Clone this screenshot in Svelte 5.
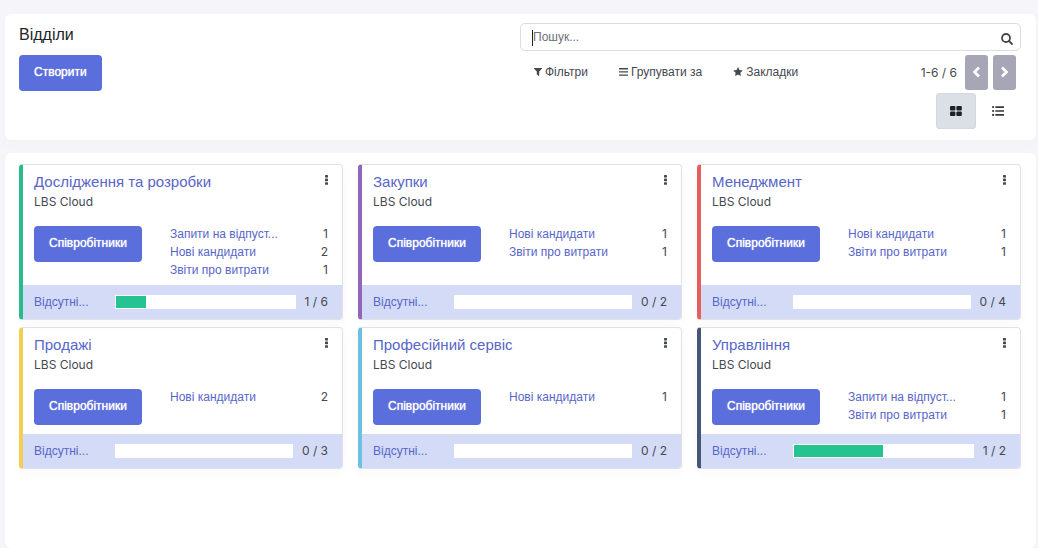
<script>
  const absent = 'Відсутні...';
  const leave = 'Запити на відпуст...';
  const candidates = 'Нові кандидати';
  const expenses = 'Звіти про витрати';

  const departments = [
    { name: 'Дослідження та розробки', color: '#2abb8c', rows: [[leave, 1], [candidates, 2], [expenses, 1]], away: 1, total: 6 },
    { name: 'Закупки', color: '#9365b8', rows: [[candidates, 1], [expenses, 1]], away: 0, total: 2 },
    { name: 'Менеджмент', color: '#e5605c', rows: [[candidates, 1], [expenses, 1]], away: 0, total: 4 },
    { name: 'Продажі', color: '#f2cf52', rows: [[candidates, 2]], away: 0, total: 3 },
    { name: 'Професійний сервіс', color: '#6cc1e0', rows: [[candidates, 1]], away: 0, total: 2 },
    { name: 'Управління', color: '#475577', rows: [[leave, 1], [expenses, 1]], away: 1, total: 2 }
  ];

  let query = $state('');
</script>

<header class="panel control">
  <div class="left">
    <h1>Відділи</h1>
    <button class="primary create">Створити</button>
  </div>
  <div class="right">
    <div class="search">
      <input type="text" aria-label="Пошук" placeholder="Пошук..." bind:value={query} />
      <span class="caret"></span>
      <button class="plain" aria-label="Пошук">
        <svg width="12" height="12" viewBox="0 0 12 12" fill="none" stroke="#444950" stroke-width="1.800"><circle cx="5" cy="5" r="4" /><path d="M8 8l3 3" stroke-linecap="round" /></svg>
      </button>
    </div>
    <div class="tools">
      <div class="filters">
        <button class="plain">
          <svg width="8" height="8" viewBox="0 0 8 8" fill="#444950"><path d="M.4 0h7.2c.4 0 .5.4.3.7L5.200 3.500V7.600c0 .4-.3.500-.6.300L3 6.600c-.2-.1-.2-.2-.2-.4V3.500L.1.700C-.1.400 0 0 .4 0z" /></svg>
          Фільтри
        </button>
        <button class="plain">
          <svg width="9" height="8" viewBox="0 0 9 8" fill="#444950"><path d="M0 0h9v1.400H0zM0 3.200h9v1.400H0zM0 6.400h9v1.400H0z" /></svg>
          Групувати за
        </button>
        <button class="plain">
          <svg width="10" height="9" viewBox="0 0 10 9" fill="#444950"><path d="M5 0l1.450 3 3.350.450-2.450 2.250.6 3.300L5 7.400 2.050 9l.6-3.300L.2 3.450 3.550 3z" /></svg>
          Закладки
        </button>
      </div>
      <div class="pager">
        <span>1-6 / 6</span>
        <button aria-label="Попередня"><svg width="9" height="12" viewBox="0 0 9 12" fill="none" stroke="#fff" stroke-width="2.600"><path d="M7 1.500L2.500 6 7 10.500" /></svg></button>
        <button aria-label="Наступна"><svg width="9" height="12" viewBox="0 0 9 12" fill="none" stroke="#fff" stroke-width="2.600"><path d="M2 1.500L6.500 6 2 10.500" /></svg></button>
      </div>
    </div>
    <div class="views">
      <button class="active" aria-label="Канбан">
        <svg width="12" height="10" viewBox="0 0 12 10" fill="#1d2127"><rect width="5.400" height="4.500" rx="1" /><rect x="6.400" width="5.400" height="4.500" rx="1" /><rect y="5.400" width="5.400" height="4.500" rx="1" /><rect x="6.400" y="5.400" width="5.400" height="4.500" rx="1" /></svg>
      </button>
      <button aria-label="Список">
        <svg width="12" height="10" viewBox="0 0 12 10" fill="#343a40"><circle cx="1.100" cy="1.100" r="1.100" /><circle cx="1.100" cy="5" r="1.100" /><circle cx="1.100" cy="8.900" r="1.100" /><path d="M3.300.3H12v1.600H3.300zM3.300 4.200H12v1.600H3.300zM3.300 8.100H12v1.600H3.300z" /></svg>
      </button>
    </div>
  </div>
</header>

<main class="panel board">
  {#each departments as d}
    <article style:border-left-color={d.color}>
      <div class="heading">
        <h2><a href="#department">{d.name}</a></h2>
        <button class="plain menu" aria-label="Меню">
          <svg width="3" height="10" viewBox="0 0 3 10" fill="#444950"><rect width="3" height="2.600" rx=".6" /><rect y="3.600" width="3" height="2.600" rx=".6" /><rect y="7.200" width="3" height="2.600" rx=".6" /></svg>
        </button>
      </div>
      <p>LBS Cloud</p>
      <div class="body">
        <div class="action"><button class="primary">Співробітники</button></div>
        <ul>
          {#each d.rows as [label, count]}
            <li><a href="#requests">{label}</a><span>{count}</span></li>
          {/each}
        </ul>
      </div>
      <footer>
        <a href="#absent">{absent}</a>
        <div class="bar"><div class="fill" style:width="{(d.away / d.total) * 100}%"></div></div>
        <span>{d.away} / {d.total}</span>
      </footer>
    </article>
  {/each}
</main>

<style>
  :global(body) {
    background: #f6f6fa;
    color: #444950;
    font: 12px/18px 'Liberation Sans', Arial, sans-serif;
  }
  :global(#app) {
    display: flex;
    flex-direction: column;
    gap: 13px;
    box-sizing: border-box;
    min-height: 100vh;
    padding: 14px 2px 0 5px;
  }
  * { box-sizing: border-box; }
  h1, h2, p, ul { margin: 0; padding: 0; font-weight: 400; }
  button { font: inherit; color: inherit; border: 0; padding: 0; cursor: pointer; }
  a { color: #5766c9; text-decoration: none; }
  svg { display: block; flex: none; }
  .panel { background: #fff; border-radius: 6px; box-shadow: 0 4px 12px rgba(60, 60, 120, 0.03); }
  .control {
    display: grid;
    grid-template-columns: 1fr 1fr;
    padding: 9px 15px 11px 14px;
  }
  h1 { font-size: 16px; line-height: 24px; color: #212529; }
  .primary {
    height: 36px;
    padding: 0 15px 2px;
    border-radius: 4px;
    background: #5a6fdc;
    color: #fff;
    text-shadow: 0 0 1px #fff;
  }
  .create { margin-top: 8px; }
  .plain { display: flex; align-items: center; gap: 3px; background: none; }
  .search {
    position: relative;
    display: flex;
    align-items: center;
    height: 28px;
    padding: 0 7px 0 12px;
    border: 1px solid #dcdde1;
    border-radius: 5px;
  }
  .search input {
    flex: 1;
    min-width: 0;
    padding: 0;
    border: 0;
    outline: 0;
    background: none;
    font: inherit;
    color: #444950;
  }
  .search input::placeholder { color: #6c7178; opacity: 1; }
  .search .plain { padding-top: 4px; }
  .caret { position: absolute; left: 11px; top: 6px; width: 1px; height: 16px; background: #222; }
  .tools { display: flex; justify-content: space-between; align-items: center; margin-top: 4px; padding-right: 5px; }
  .filters { display: flex; gap: 31px; padding: 0 0 2px 14px; }
  .pager { display: flex; align-items: center; gap: 5px; }
  .pager span { padding-right: 3px; font: 12px/18px Inter, sans-serif; }
  .pager button {
    display: grid;
    place-items: center;
    width: 23px;
    height: 35px;
    padding-bottom: 2px;
    border-radius: 3px;
    background: #a6a6b7;
  }
  .views { display: flex; justify-content: flex-end; gap: 2px; margin-top: 3px; padding-right: 3px; }
  .views button {
    display: grid;
    place-items: center;
    width: 40px;
    height: 36px;
    border: 1px solid transparent;
    border-radius: 3px;
    background: none;
  }
  .views .active { background: #dae0e5; border-color: #d3d9df; }
  .board {
    flex: 1;
    display: grid;
    grid-template-columns: repeat(3, 1fr);
    align-content: start;
    gap: 7px 15px;
    padding: 11px 15px 11px 14px;
  }
  article {
    display: flex;
    flex-direction: column;
    border: 1px solid #dee2e6;
    border-left: 4px solid;
    border-radius: 4px;
    box-shadow: 0 4px 12px rgba(60, 60, 120, 0.03);
    overflow: hidden;
  }
  .heading { display: flex; justify-content: space-between; padding: 7px 14px 1px 11px; }
  h2 { font-size: 15px; line-height: 20px; }
  .menu { height: 16px; }
  p { padding: 0 11px; font: 12px/18px Inter, sans-serif; }
  .body { flex: 1; display: grid; grid-template-columns: 136px 1fr; padding: 14px 14px 0 11px; }
  .action { padding: 1px 0 9px; }
  ul { list-style: none; padding-bottom: 6px; }
  li { display: flex; justify-content: space-between; }
  li span, footer span { font: 12px/18px Inter, sans-serif; }
  footer {
    display: flex;
    align-items: center;
    height: 34px;
    padding: 0 14px 0 11px;
    background: #d4dbf6;
  }
  footer a { width: 81px; }
  .bar { flex: 1; height: 14px; margin-right: 9px; padding: 1px; background: #fff; }
  .fill { height: 12px; background: #25c391; }
</style>
